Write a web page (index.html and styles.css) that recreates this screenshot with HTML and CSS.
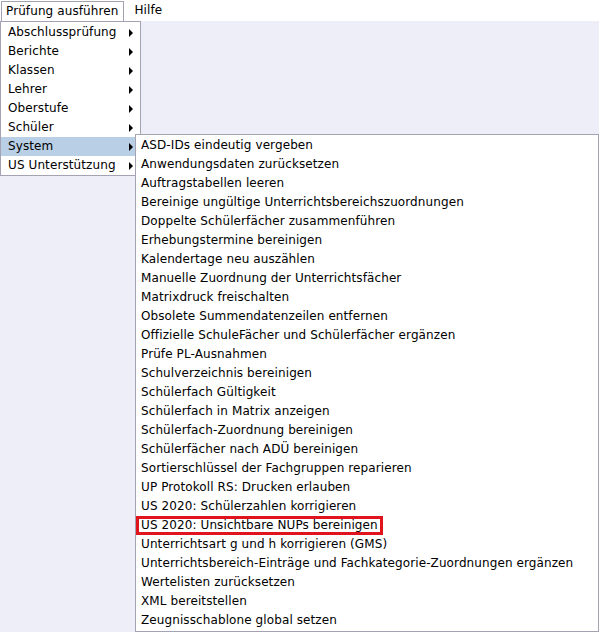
FILE: index.html
```html
<!DOCTYPE html>
<html>
<head>
<meta charset="utf-8">
<link rel="stylesheet" href="styles.css">
</head>
<body>
<div class="menubar">
  <div class="top-item open">Prüfung ausführen</div>
  <div class="top-item">Hilfe</div>
</div>
<div class="desk">
  <ul class="menu main-menu">
    <li class="sub">Abschlussprüfung</li>
    <li class="sub">Berichte</li>
    <li class="sub">Klassen</li>
    <li class="sub">Lehrer</li>
    <li class="sub">Oberstufe</li>
    <li class="sub">Schüler</li>
    <li class="sub active">System</li>
    <li class="sub">US Unterstützung</li>
  </ul>
  <ul class="menu system-menu">
    <li>ASD-IDs eindeutig vergeben</li>
    <li>Anwendungsdaten zurücksetzen</li>
    <li>Auftragstabellen leeren</li>
    <li>Bereinige ungültige Unterrichtsbereichszuordnungen</li>
    <li>Doppelte Schülerfächer zusammenführen</li>
    <li>Erhebungstermine bereinigen</li>
    <li>Kalendertage neu auszählen</li>
    <li>Manuelle Zuordnung der Unterrichtsfächer</li>
    <li>Matrixdruck freischalten</li>
    <li>Obsolete Summendatenzeilen entfernen</li>
    <li>Offizielle SchuleFächer und Schülerfächer ergänzen</li>
    <li>Prüfe PL-Ausnahmen</li>
    <li>Schulverzeichnis bereinigen</li>
    <li>Schülerfach Gültigkeit</li>
    <li>Schülerfach in Matrix anzeigen</li>
    <li>Schülerfach-Zuordnung bereinigen</li>
    <li>Schülerfächer nach ADÜ bereinigen</li>
    <li>Sortierschlüssel der Fachgruppen reparieren</li>
    <li>UP Protokoll RS: Drucken erlauben</li>
    <li>US 2020: Schülerzahlen korrigieren</li>
    <li><span class="marked">US 2020: Unsichtbare NUPs bereinigen</span></li>
    <li>Unterrichtsart g und h korrigieren (GMS)</li>
    <li>Unterrichtsbereich-Einträge und Fachkategorie-Zuordnungen ergänzen</li>
    <li>Wertelisten zurücksetzen</li>
    <li>XML bereitstellen</li>
    <li>Zeugnisschablone global setzen</li>
  </ul>
</div>
</body>
</html>
```
FILE: styles.css
```css
html, body {
  margin: 0;
  padding: 0;
  height: 100%;
}
body {
  font-family: "DejaVu Sans", sans-serif;
  font-size: 12px;
  letter-spacing: 0.1px;
  color: #000;
  background: #eeeef8;
  overflow: hidden;
}
.menubar {
  height: 21px;
  background: #fff;
  display: flex;
  align-items: stretch;
  box-sizing: border-box;
}
.top-item {
  padding: 0 6px 0 6px;
  line-height: 19px;
  border: 1px solid transparent;
  margin-left: 1px;
}
.top-item.open {
  border-color: #a3a3b4;
  border-bottom: none;
  padding-left: 4px;
  padding-right: 5px;
  margin-top: 1px;
  line-height: 18px;
}
.top-item + .top-item {
  margin-left: 3px;
}
.desk {
  position: relative;
}
.menu {
  list-style: none;
  margin: 0;
  padding: 0;
  background: #fff;
  border: 1px solid #a3a3b4;
  position: absolute;
  box-sizing: border-box;
}
.menu li {
  height: 19px;
  line-height: 19px;
  padding-left: 7px;
  white-space: nowrap;
  position: relative;
}
.main-menu {
  left: 0;
  top: 0;
  width: 141px;
  padding-top: 1px;
}
.main-menu li.sub::after {
  content: "";
  position: absolute;
  right: 7px;
  top: 6px;
  border-left: 4px solid #000;
  border-top: 4px solid transparent;
  border-bottom: 4px solid transparent;
}
.main-menu li.active {
  background: #b8cfe5;
}
.system-menu {
  left: 135px;
  top: 113px;
  width: 464px;
  height: 498px;
  padding-top: 1px;
  box-shadow: 1px 1px 0 #c8c8d4;
}
.system-menu li {
  padding-left: 5px;
}
.marked {
  position: relative;
}
.marked::before {
  content: "";
  position: absolute;
  left: -5px;
  right: -5px;
  top: -2px;
  bottom: -3px;
  border: 3px solid #e0141c;
}
```
